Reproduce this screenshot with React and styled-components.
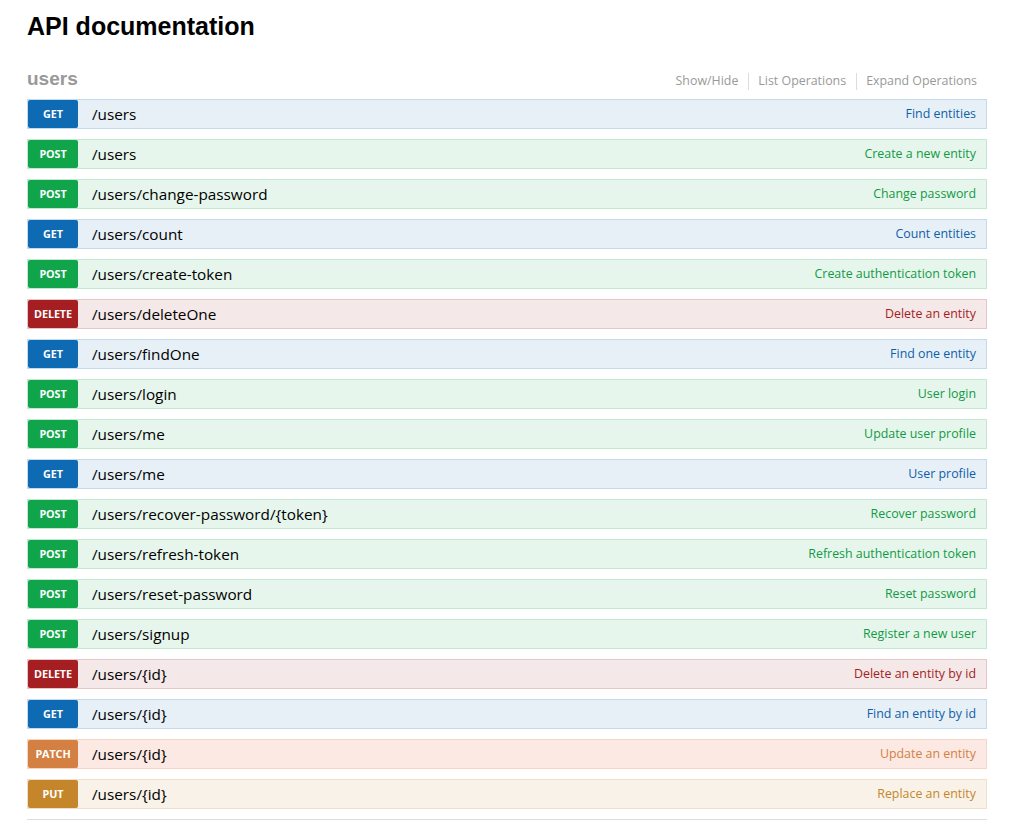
import React from "react";
import styled, { createGlobalStyle } from "styled-components";

const Global = createGlobalStyle`
  html, body { margin: 0; padding: 0; background: #fff; }
  body { font-family: "Open Sans", "DejaVu Sans", sans-serif; color: #000; }
`;

const METHODS = {
  GET: { badge: "#0f6ab4", bg: "#e7f0f7", border: "#c3d9ec", text: "#0f5fa8" },
  POST: { badge: "#10a54a", bg: "#e7f6ec", border: "#c3e8d1", text: "#109a45" },
  DELETE: { badge: "#a41e22", bg: "#f5e8e8", border: "#e8c6c7", text: "#a41e22" },
  PATCH: { badge: "#d38042", bg: "#fce9e3", border: "#f5d5c3", text: "#d38042" },
  PUT: { badge: "#c5862b", bg: "#f9f2e9", border: "#f0e0ca", text: "#c5862b" },
};

const Page = styled.div`
  padding: 0 25px 0 27px;
  width: 960px;
`;

const Title = styled.h1`
  margin: 14px 0 0;
  font-family: "Liberation Sans", Arial, sans-serif;
  font-weight: bold;
  font-size: 25px;
  line-height: 25px;
  color: #000;
`;

const Section = styled.section`
  margin-top: 24px;
  border-bottom: 1px solid #ddd;
`;

const SectionHeader = styled.div`
  display: flex;
  justify-content: space-between;
  align-items: flex-start;
  height: 36px;
`;

const SectionName = styled.h2`
  margin: 0;
  font-family: "Liberation Sans", Arial, sans-serif;
  font-weight: bold;
  font-size: 19px;
  line-height: 31px;
  color: #999;
`;

const Actions = styled.ul`
  display: flex;
  list-style: none;
  margin: 3px 0 0;
  padding: 0;
`;

const Action = styled.li`
  font-size: 12.4px;
  line-height: 30px;
  color: #999;
  padding: 0 10px;
  position: relative;
  & + &::before {
    content: "";
    position: absolute;
    left: 0;
    top: 7px;
    height: 17px;
    border-left: 1px solid #ddd;
  }
`;

const List = styled.ul`
  list-style: none;
  margin: 0;
  padding: 0 0 10px;
  display: flex;
  flex-direction: column;
  gap: 10px;
`;

const Row = styled.li`
  display: flex;
  align-items: center;
  height: 28px;
  border: 1px solid ${(p) => METHODS[p.$m].border};
  background: ${(p) => METHODS[p.$m].bg};
`;

const Badge = styled.span`
  flex: 0 0 50px;
  height: 28px;
  border-radius: 2px;
  background: ${(p) => METHODS[p.$m].badge};
  color: #fff;
  font-weight: bold;
  font-size: 10.8px;
  line-height: 28px;
  text-align: center;
  letter-spacing: -0.1px;
  text-transform: uppercase;
`;

const Path = styled.span`
  margin-left: 14px;
  font-size: 15.3px;
  line-height: 28px;
  color: #000;
  flex: 1;
`;

const Summary = styled.span`
  padding-right: 10px;
  font-size: 12.4px;
  line-height: 26px;
  color: ${(p) => METHODS[p.$m].text};
`;

const ops = [
  ["GET", "/users", "Find entities"],
  ["POST", "/users", "Create a new entity"],
  ["POST", "/users/change-password", "Change password"],
  ["GET", "/users/count", "Count entities"],
  ["POST", "/users/create-token", "Create authentication token"],
  ["DELETE", "/users/deleteOne", "Delete an entity"],
  ["GET", "/users/findOne", "Find one entity"],
  ["POST", "/users/login", "User login"],
  ["POST", "/users/me", "Update user profile"],
  ["GET", "/users/me", "User profile"],
  ["POST", "/users/recover-password/{token}", "Recover password"],
  ["POST", "/users/refresh-token", "Refresh authentication token"],
  ["POST", "/users/reset-password", "Reset password"],
  ["POST", "/users/signup", "Register a new user"],
  ["DELETE", "/users/{id}", "Delete an entity by id"],
  ["GET", "/users/{id}", "Find an entity by id"],
  ["PATCH", "/users/{id}", "Update an entity"],
  ["PUT", "/users/{id}", "Replace an entity"],
];

function Resource({ name, items }) {
  return (
    <Section>
      <SectionHeader>
        <SectionName>{name}</SectionName>
        <Actions>
          <Action>Show/Hide</Action>
          <Action>List Operations</Action>
          <Action>Expand Operations</Action>
        </Actions>
      </SectionHeader>
      <List>
        {items.map(([m, path, summary], i) => (
          <Row key={i} $m={m}>
            <Badge $m={m}>{m}</Badge>
            <Path>{path}</Path>
            <Summary $m={m}>{summary}</Summary>
          </Row>
        ))}
      </List>
    </Section>
  );
}

export default function App() {
  return (
    <>
      <Global />
      <Page>
        <Title>API documentation</Title>
        <Resource name="users" items={ops} />
      </Page>
    </>
  );
}
